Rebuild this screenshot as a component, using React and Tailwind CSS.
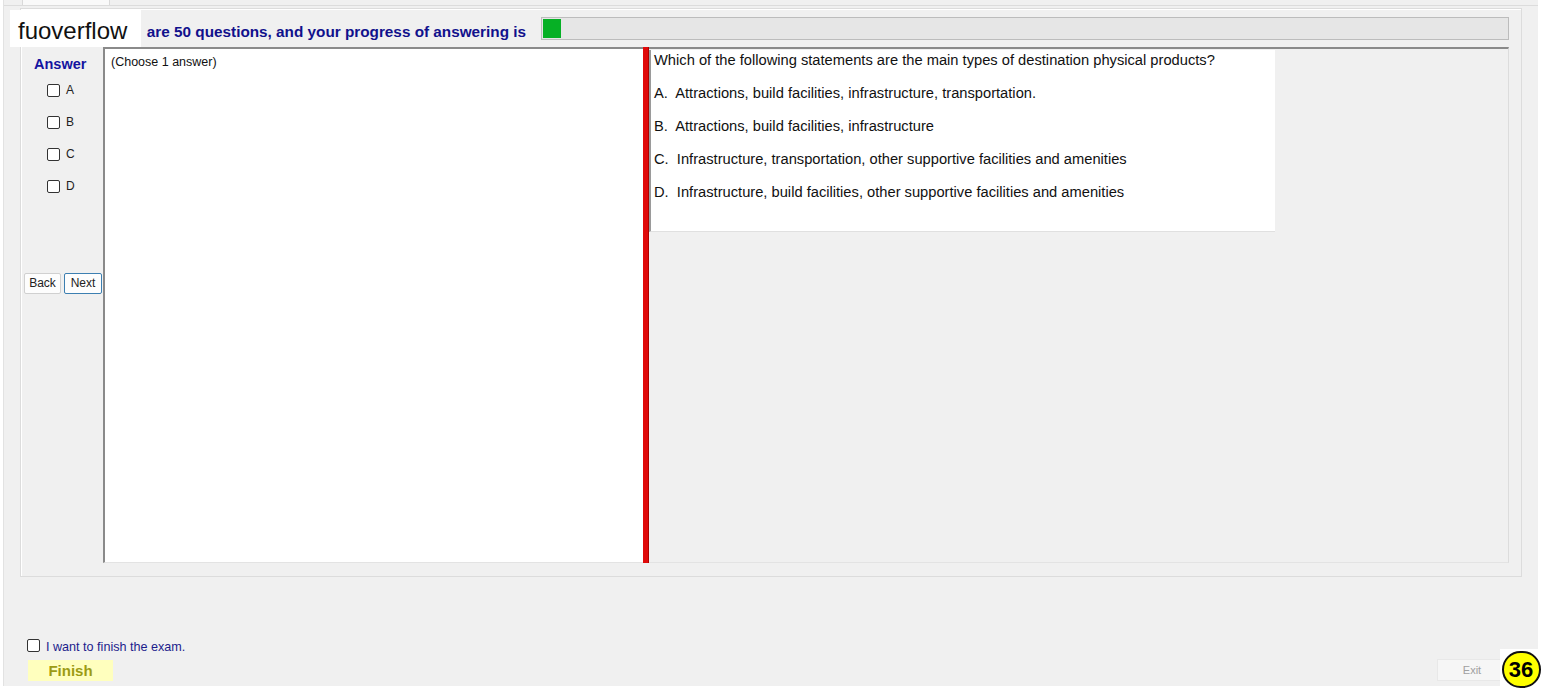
const font = "font-['Liberation_Sans',Arial,sans-serif]";

function Box({ className = "" }) {
  return (
    <span
      className={`inline-block w-[13px] h-[13px] border border-[#333333] rounded-[2px] bg-white ${className}`}
    />
  );
}

const options = ["A", "B", "C", "D"];

const answers = [
  "A.  Attractions, build facilities, infrastructure, transportation.",
  "B.  Attractions, build facilities, infrastructure",
  "C.  Infrastructure, transportation, other supportive facilities and amenities",
  "D.  Infrastructure, build facilities, other supportive facilities and amenities",
];

export default function App() {
  return (
    <div className={`relative w-[1542px] h-[690px] bg-white overflow-hidden ${font}`}>
      <div className="ml-[3px] w-[1535px] h-[686px] bg-[#f0f0f0] border-l border-[#e2e2e2] flex flex-col">
        {/* tab strip */}
        <div className="h-[6px] flex border-b border-[#dcdcdc]">
          <div className="ml-[18px] w-[88px] bg-[#f9f9f9] border-x border-[#d9d9d9]" />
        </div>

        {/* group box */}
        <div className="ml-[16px] mt-[2px] w-[1502px] h-[569px] border border-[#dcdcdc] shadow-[inset_1px_1px_0_#ffffff] flex flex-col">
          <div className="mt-[8px] h-[23px] flex items-center">
            <div className="w-[520px] text-right pr-[15px] pt-[8px] text-[15.3px] font-bold text-[#11118c] whitespace-nowrap">
              are 50 questions, and your progress of answering is
            </div>
            <div className="w-[968px] h-[23px] bg-[#e6e6e6] border border-[#bcbcbc] flex p-[1px]">
              <div className="w-[18px] h-full bg-[#06b025]" />
            </div>
          </div>

          <div className="mt-[7px] h-[516px] flex">
            {/* answer column */}
            <div className="w-[82px] flex flex-col">
              <div className="mt-[7px] pl-[13px] text-[14.5px] font-bold text-[#1414a0]">Answer</div>
              <div className="mt-[8px] flex flex-col gap-[19px] pl-[26px]">
                {options.map((o) => (
                  <div key={o} className="flex items-center gap-[6px] h-[13px] text-[12px] text-[#222]">
                    <Box />
                    <span>{o}</span>
                  </div>
                ))}
              </div>
              <div className="mt-[80px] pl-[3px] flex gap-[3px]">
                <button className="w-[37px] h-[21px] bg-[#fdfdfd] border border-[#d0d0d0] rounded-[2px] text-[12px] text-[#222]">
                  Back
                </button>
                <button className="w-[38px] h-[21px] bg-[#fdfdfd] border border-[#3c7fb1] rounded-[2px] text-[12px] text-[#222]">
                  Next
                </button>
              </div>
            </div>

            {/* notes textbox */}
            <div className="w-[540px] h-full bg-white border-t-2 border-l-2 border-t-[#8a8a8a] border-l-[#8a8a8a] border-b border-b-[#e3e3e3] pl-[6px] pt-[4px] text-[12.5px] text-[#111]">
              (Choose 1 answer)
            </div>

            {/* splitter */}
            <div className="w-[6px] h-full bg-[#e00a0a] border-r border-[#b00000]" />

            {/* question panel */}
            <div className="w-[860px] h-full border-t-2 border-t-[#8a8a8a] border-r border-r-[#dcdcdc] border-b border-b-[#e3e3e3] bg-[#f0f0f0]">
              <div className="mt-[1px] w-[626px] h-[182px] bg-white border-l-2 border-l-[#9a9a9a] border-b border-b-[#e0e0e0] pl-[3px] pt-[2px] text-[14.7px] text-[#111] leading-[16px]">
                <div>Which of the following statements are the main types of destination physical products?</div>
                {answers.map((a) => (
                  <div key={a} className="mt-[17px] whitespace-pre">
                    {a}
                  </div>
                ))}
              </div>
            </div>
          </div>
        </div>

        {/* bottom */}
        <div className="flex-1 flex items-end justify-between pb-[5px]">
          <div className="ml-[23px] flex flex-col">
            <div className="flex items-center gap-[6px] text-[12.6px] text-[#1c1c8c]">
              <Box />
              <span className="mt-[4px]">I want to finish the exam.</span>
            </div>
            <button className="mt-[3px] ml-[1px] w-[85px] h-[21px] bg-[#ffffbe] text-[15px] font-bold text-[#9c9c14]">
              Finish
            </button>
          </div>
          <button className="mr-[34px] w-[67px] h-[22px] bg-[#f6f6f6] border border-[#e8e8e8] text-[11px] text-[#a0a0a0] pl-[3px]">
            Exit
          </button>
        </div>
      </div>

      {/* watermark */}
      <div className="absolute left-[10px] top-[10px] w-[131px] h-[37px] bg-white pt-[9px] pl-[8px] text-[24px] leading-[24px] text-[#111]">
        fuoverflow
      </div>

      {/* page badge */}
      <div className="absolute right-0 bottom-0 w-[42px] h-[41px] bg-white flex items-center justify-center">
        <div className="w-[39px] h-[37px] rounded-full bg-[#ffff00] border-2 border-[#111] flex items-center justify-center text-[22px] font-bold text-black">
          36
        </div>
      </div>
    </div>
  );
}
